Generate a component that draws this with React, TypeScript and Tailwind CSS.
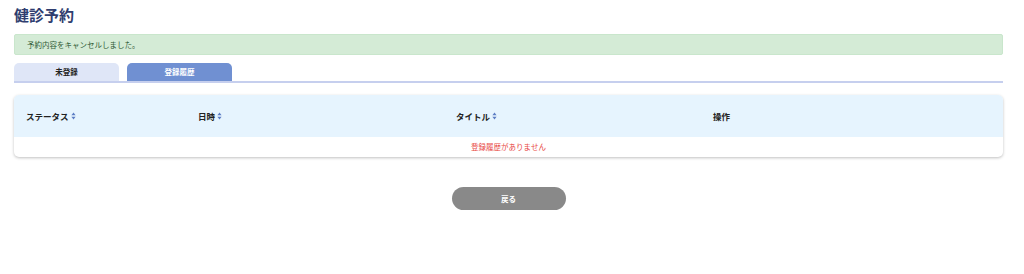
function SortIcon() {
    return (
        <svg width="5" height="8" viewBox="0 0 5 8" className="ml-[2px] inline-block">
            <path d="M2.5 0.5 L4.6 3.2 L0.4 3.2 Z" fill="#5b7cc4" />
            <path d="M2.5 7.5 L4.6 4.8 L0.4 4.8 Z" fill="#5b7cc4" />
        </svg>
    );
}

export default function App() {
    const font = { fontFamily: '"Noto Sans CJK JP", "Noto Sans", sans-serif' };
    return (
        <div className="w-[1024px] h-[274px] bg-white px-[14px] pt-[3px]" style={font}>
            <h1 className="text-[15px] leading-[24px] font-bold text-[#2f3d6f]">健診予約</h1>
            <div className="mt-[7px] mr-[7px] h-[21px] flex items-center rounded-[2px] border border-[#c9e6cc] bg-[#d4ebd6] px-[12px] text-[7.5px] text-[#2f5a35]">
                予約内容をキャンセルしました。
            </div>
            <div className="mt-[8px] mr-[7px] flex gap-[8px] border-b-2 border-[#c6cfee]">
                <button className="h-[18px] w-[105px] rounded-t-[5px] bg-[#dfe6f7] text-[7.5px] font-bold text-[#222]">未登録</button>
                <button className="h-[18px] w-[105px] rounded-t-[5px] bg-[#7090d2] text-[7.5px] font-bold text-white">登録履歴</button>
            </div>
            <div className="mt-[12px] mr-[7px] overflow-hidden rounded-[5px] bg-white shadow-[0_1px_3px_rgba(0,0,0,0.25)]">
                <div className="grid h-[42px] grid-cols-[172px_258px_257px_1fr] items-center bg-[#e6f4fe] px-[12px] text-[8.5px] font-bold text-[#222]">
                    <div className="flex items-center">ステータス<SortIcon /></div>
                    <div className="flex items-center">日時<SortIcon /></div>
                    <div className="flex items-center">タイトル<SortIcon /></div>
                    <div>操作</div>
                </div>
                <div className="flex h-[20px] items-center justify-center text-[7.5px] text-[#e8483f]">登録履歴がありません</div>
            </div>
            <div className="mt-[30px] mr-[7px] flex justify-center">
                <button className="h-[23px] w-[114px] rounded-full bg-[#898989] text-[7.5px] font-bold text-white">戻る</button>
            </div>
        </div>
    );
}
